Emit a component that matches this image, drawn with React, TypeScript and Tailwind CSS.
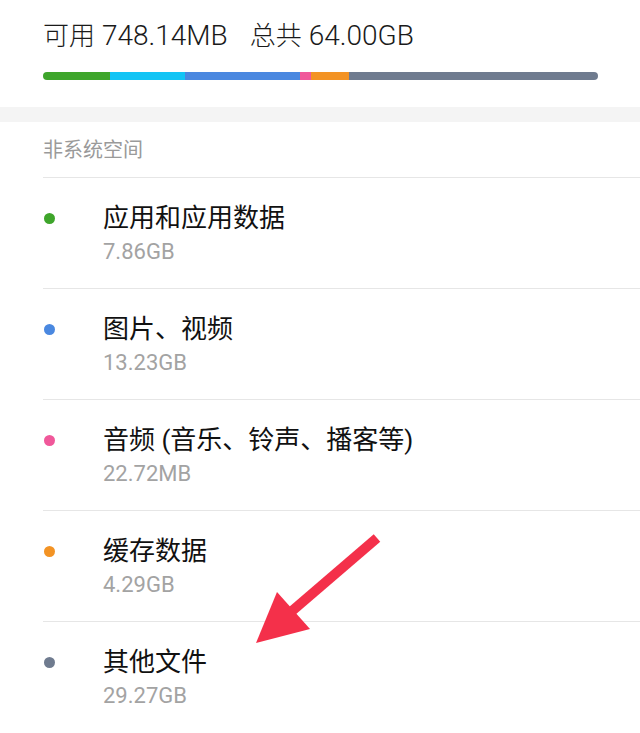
import React from "react"

type Item = {
	name: string
	size: string
	color: string
}

const items: Item[] = [
	{ name: "应用和应用数据", size: "7.86GB", color: "bg-[#3ea52b]" },
	{ name: "图片、视频", size: "13.23GB", color: "bg-[#4a88e0]" },
	{ name: "音频 (音乐、铃声、播客等)", size: "22.72MB", color: "bg-[#f0589a]" },
	{ name: "缓存数据", size: "4.29GB", color: "bg-[#f39324]" },
	{ name: "其他文件", size: "29.27GB", color: "bg-[#6f7b8f]" },
]

// widths in px of the usage bar, total 555
const segments = [
	{ w: 67, color: "bg-[#3ea52b]" },
	{ w: 75, color: "bg-[#12c4f5]" },
	{ w: 115, color: "bg-[#4a88e0]" },
	{ w: 11, color: "bg-[#f0589a]" },
	{ w: 38, color: "bg-[#f39324]" },
	{ w: 249, color: "bg-[#6f7b8f]" },
]

const font = "font-['Roboto','Noto_Sans_CJK_SC',sans-serif]"

export default function App() {
	return (
		<div className={`relative w-[640px] h-[733px] overflow-hidden bg-white ${font}`}>
			<div className="h-[107px] px-[43px] pt-[17px]">
				<div className="flex h-[38px] items-center text-[28px] font-light text-[#1a1a1a]">
					<span className="text-[26px]">可用</span>
					<span className="ml-[7px]">748.14MB</span>
					<span className="ml-[22px] text-[26px]">总共</span>
					<span className="ml-[7px]">64.00GB</span>
				</div>
				<div className="mt-[17px] flex h-[8px] w-[555px] overflow-hidden rounded-full">
					{segments.map((s, i) => (
						<div key={i} className={`${s.color} h-full`} style={{ width: s.w }} />
					))}
				</div>
			</div>
			<div className="h-[15px] bg-[#f4f4f4]" />
			<div className="pl-[43px]">
				<div className="flex h-[55px] items-center text-[20px] text-[#9a9a9a]">
					非系统空间
				</div>
				{items.map((it) => (
					<div key={it.name} className="h-[111px] border-t border-[#e6e6e6] pt-[24px]">
						<div className="flex">
							<div className="flex h-[32px] w-[60px] items-center pl-[1px]">
								<span className={`h-[11px] w-[11px] rounded-full ${it.color}`} />
							</div>
							<div>
								<div className="text-[26px] leading-[32px] text-[#111]">{it.name}</div>
								<div className="mt-[5px] text-[22px] leading-[26px] text-[#a3a3a3]">{it.size}</div>
							</div>
						</div>
					</div>
				))}
			</div>
			<svg className="absolute left-0 top-0" width="640" height="733" viewBox="0 0 640 733">
				<line x1="377" y1="538" x2="292" y2="611" stroke="#f4304a" strokeWidth="10" strokeLinecap="butt" />
				<polygon points="256,643 277,592 310,629" fill="#f4304a" />
			</svg>
		</div>
	)
}
